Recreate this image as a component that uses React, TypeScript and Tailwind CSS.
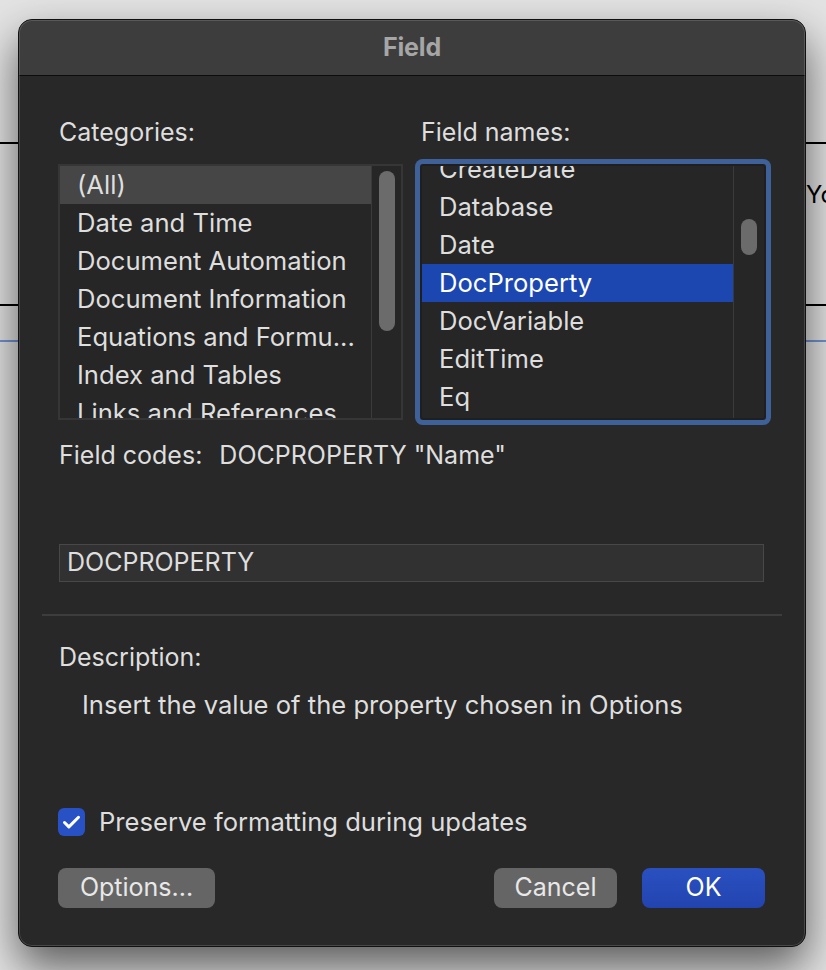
import { Check } from 'lucide-react';

const categories = [
    '(All)',
    'Date and Time',
    'Document Automation',
    'Document Information',
    'Equations and Formu...',
    'Index and Tables',
    'Links and References',
];

const fieldNames = ['CreateDate', 'Database', 'Date', 'DocProperty', 'DocVariable', 'EditTime', 'Eq'];

const font = { fontFamily: 'Inter, "Liberation Sans", sans-serif' };

export default function App() {
    return (
        <div className="relative w-[826px] h-[970px] overflow-hidden bg-[#e3e3e3]" style={font}>
            {/* Document behind the sheet */}
            <div className="pt-[142px]">
                <div className="h-[2px] bg-black" />
                <div className="h-[160px] pl-[806px] pt-[36px] text-[24px] leading-[30px] text-black whitespace-nowrap">
                    Your
                </div>
                <div className="h-[2px] bg-black" />
                <div className="h-[34px]" />
                <div className="h-[2px] bg-[#7192d2]" />
            </div>

            {/* Field dialog */}
            <div className="absolute left-[18px] top-[19px] w-[788px] h-[928px] rounded-[14px] border border-[#111] bg-[#282828] overflow-hidden shadow-[0_20px_44px_rgba(0,0,0,0.6)] flex flex-col">
                <div className="h-[56px] shrink-0 bg-[#3d3d3d] border-b border-[#0c0c0c] flex items-center justify-center">
                    <span className="text-[25px] font-bold text-[#a6a6a6] tracking-[-0.2px]">Field</span>
                </div>

                <div className="flex flex-col px-[39px] text-[#dedede]">
                    <div className="mt-[41px] flex gap-[17px] text-[25px] leading-[30px]">
                        <div className="w-[345px] pl-[1px]">Categories:</div>
                        <div className="pl-[1px]">Field names:</div>
                    </div>

                    <div className="mt-[17px] flex gap-[17px]">
                        {/* Categories list */}
                        <div className="w-[345px] h-[256px] border-2 border-[#363636] bg-[#262626] flex overflow-hidden">
                            <div className="flex-1 flex flex-col">
                                {categories.map((c, i) => (
                                    <div
                                        key={c}
                                        className={`h-[38px] shrink-0 pl-[17px] flex items-center text-[25.6px] whitespace-nowrap ${i === 0 ? 'bg-[#464646]' : ''}`}
                                    >
                                        {c}
                                    </div>
                                ))}
                            </div>
                            <div className="w-[30px] shrink-0 border-l border-[#3a3a3a] flex justify-center pt-[5px]">
                                <div className="w-[16px] h-[160px] rounded-full bg-[#6b6b6b]" />
                            </div>
                        </div>

                        {/* Field names list */}
                        <div className="w-[346px] h-[256px] rounded-[3px] border-2 border-[#1f1f1f] bg-[#262626] flex overflow-hidden shadow-[0_0_0_5px_#3f6199]">
                            <div className="flex-1 flex flex-col -mt-[16px]">
                                {fieldNames.map((f) => (
                                    <div
                                        key={f}
                                        className={`h-[38px] shrink-0 pl-[17px] flex items-center text-[25.6px] whitespace-nowrap ${f === 'DocProperty' ? 'bg-[#1c47b1] text-white' : ''}`}
                                    >
                                        {f}
                                    </div>
                                ))}
                            </div>
                            <div className="w-[31px] shrink-0 border-l border-[#3a3a3a] flex justify-center pt-[53px]">
                                <div className="w-[16px] h-[36px] rounded-full bg-[#6b6b6b]" />
                            </div>
                        </div>
                    </div>

                    <div className="mt-[20px] flex text-[25px] leading-[30px] pl-[1px]">
                        <span>Field codes:</span>
                        <span className="ml-[17px]">DOCPROPERTY "Name"</span>
                    </div>

                    <div className="mt-[74px] h-[38px] ml-[1px] mr-[2px] border border-[#484848] bg-[#313131] flex items-center pl-[7px] text-[25px]">
                        DOCPROPERTY
                    </div>

                    <div className="mt-[32px] -mx-[16px] h-[2px] bg-[#3d3d3d]" />

                    <div className="mt-[26px] text-[25px] leading-[30px] pl-[1px]">Description:</div>
                    <div className="mt-[17px] text-[25.6px] leading-[32px] pl-[24px]">
                        Insert the value of the property chosen in Options
                    </div>

                    <div className="mt-[86px] flex items-center gap-[14px]">
                        <div className="w-[27px] h-[28px] rounded-[6px] bg-[#2851c5] flex items-center justify-center">
                            <Check className="w-[21px] h-[21px] text-white" strokeWidth={3.5} />
                        </div>
                        <span className="text-[25.6px] leading-[30px]">Preserve formatting during updates</span>
                    </div>

                    <div className="mt-[31px] flex items-center">
                        <button className="w-[157px] h-[40px] rounded-[8px] bg-[#656565] text-[25px] text-[#e8e8e8]">
                            Options...
                        </button>
                        <div className="flex-1" />
                        <button className="w-[123px] h-[40px] rounded-[8px] bg-[#656565] text-[25px] text-[#e8e8e8]">
                            Cancel
                        </button>
                        <button className="ml-[25px] mr-[1px] w-[123px] h-[40px] rounded-[8px] bg-gradient-to-b from-[#2a50c0] to-[#2244b0] text-[25px] text-white">
                            OK
                        </button>
                    </div>
                </div>

                <div className="pointer-events-none absolute inset-0 rounded-[13px] ring-1 ring-inset ring-white/15" />
            </div>
        </div>
    );
}
